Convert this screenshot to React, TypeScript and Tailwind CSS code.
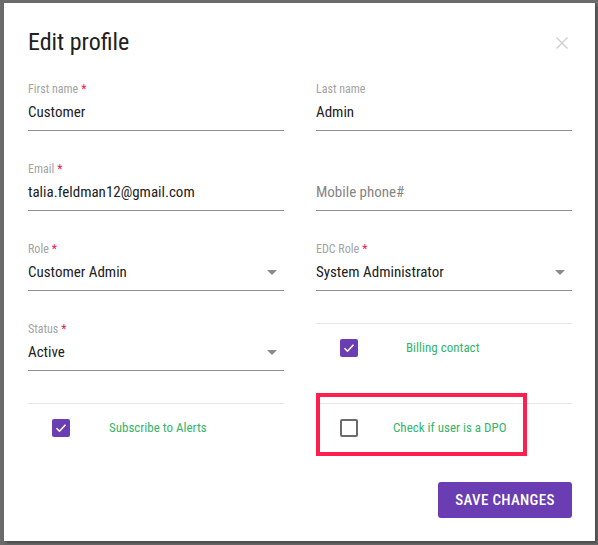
const font = { fontFamily: "'Roboto Condensed', Roboto, 'Liberation Sans', sans-serif" };

function Label({ text, required }: { text: string; required?: boolean }) {
  return (
    <div className="h-4 text-[12px] leading-4 text-[#a3a3a3]">
      {text}
      {required && <span className="ml-[3px] text-[#e8194a]">*</span>}
    </div>
  );
}

function Caret() {
  return (
    <svg width="10" height="5" viewBox="0 0 10 5" className="shrink-0">
      <path d="M0 0h10L5 5z" fill="#8a8a8a" />
    </svg>
  );
}

function Field({
  label,
  value,
  required,
  placeholder,
  select,
}: {
  label?: string;
  value: string;
  required?: boolean;
  placeholder?: boolean;
  select?: boolean;
}) {
  return (
    <div className="border-b border-[#8f8f8f] pb-[6px]">
      {label ? <Label text={label} required={required} /> : <div className="h-4" />}
      <div className="mt-[3px] flex h-6 items-center justify-between pr-[7px]">
        <span
          className={
            placeholder
              ? "text-[15px] leading-6 text-[#858585]"
              : "text-[15px] leading-6 text-[#212121]"
          }
        >
          {value}
        </span>
        {select && <Caret />}
      </div>
    </div>
  );
}

function Box({ checked }: { checked?: boolean }) {
  if (checked) {
    return (
      <div className="flex h-[18px] w-[18px] shrink-0 items-center justify-center rounded-[2px] bg-[#6a3db3]">
        <svg width="12" height="10" viewBox="0 0 12 10">
          <path d="M1.5 5.2l3 3 6-6.4" fill="none" stroke="#fff" strokeWidth="1.6" />
        </svg>
      </div>
    );
  }
  return <div className="h-[18px] w-[18px] shrink-0 rounded-[2px] border-2 border-[#6b6b6b]" />;
}

function CheckRow({ text, checked, gap }: { text: string; checked?: boolean; gap: string }) {
  return (
    <div className="mt-[2px] flex h-12 items-center border-t border-[#e8e8e8] pl-6">
      <Box checked={checked} />
      <span className={`${gap} text-[13px] leading-4 text-[#35b46c]`}>{text}</span>
    </div>
  );
}

export default function App() {
  return (
    <div className="h-[545px] w-[598px] overflow-hidden bg-[#6b6b6b] pl-[4px] pt-[3px]" style={font}>
      <div className="h-[538px] w-[591px] bg-white pl-6 pr-[23px] pt-[23px] shadow-[2px_2px_3px_rgba(0,0,0,0.35)]">
        <div className="flex items-start justify-between">
          <h2 className="text-[24px] leading-8 text-[#212121]">Edit profile</h2>
          <svg width="12" height="12" viewBox="0 0 12 12" className="mr-[4px] mt-[11px]">
            <path d="M0.5 0.5l11 11M11.5 0.5l-11 11" stroke="#cfcfcf" strokeWidth="1.4" />
          </svg>
        </div>

        <div className="mt-[23px] grid grid-cols-2 gap-x-8 gap-y-[30px]">
          <Field label="First name" value="Customer" required />
          <Field label="Last name" value="Admin" />
          <Field label="Email" value="talia.feldman12@gmail.com" required />
          <Field value="Mobile phone#" placeholder />
          <Field label="Role" value="Customer Admin" required select />
          <Field label="EDC Role" value="System Administrator" required select />
          <Field label="Status" value="Active" required select />
          <CheckRow text="Billing contact" checked gap="ml-[48px]" />
        </div>

        <div className="mt-[30px] grid grid-cols-2 gap-x-8">
          <CheckRow text="Subscribe to Alerts" checked gap="ml-[39px]" />
          <div className="relative">
            <CheckRow text="Check if user is a DPO" gap="ml-[35px]" />
            <div className="absolute left-0 top-[-8px] h-[63px] w-[211px] border-4 border-[#ff1f4e]" />
          </div>
        </div>

        <div className="mt-[31px] flex justify-end">
          <button className="h-9 w-[134px] rounded-[3px] bg-[#6a3db3] text-[15px] font-medium tracking-[0.3px] text-white">
            SAVE CHANGES
          </button>
        </div>
      </div>
    </div>
  );
}
